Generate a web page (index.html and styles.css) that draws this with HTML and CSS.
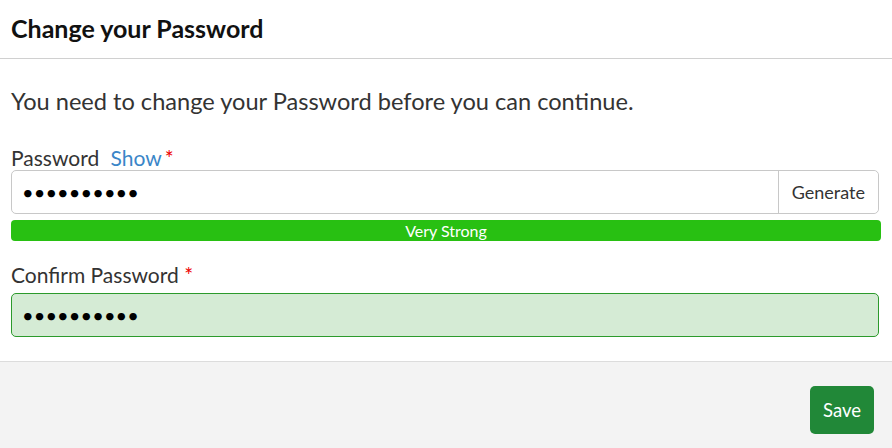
FILE: index.html
```html
<!DOCTYPE html>
<html lang="en">
<head>
  <meta charset="UTF-8" />
  <title>Change your Password</title>
  <link rel="stylesheet" href="styles.css">
</head>
<body>
  <div class="modal">
    <div class="modal-header">
      <h1>Change your Password</h1>
    </div>

    <div class="modal-body">
      <p class="intro">You need to change your Password before you can continue.</p>

      <label for="password">Password <a href="#" class="show">Show</a><span class="req">*</span></label>
      <div class="input-group">
        <input type="password" id="password" value="aaaaaaaaaa" />
        <button type="button" class="addon">Generate</button>
      </div>
      <div class="strength">Very Strong</div>

      <label for="confirm">Confirm Password <span class="req">*</span></label>
      <input type="password" id="confirm" class="valid" value="aaaaaaaaaa" />
    </div>

    <div class="modal-footer">
      <button type="submit" class="save">Save</button>
    </div>
  </div>
</body>
</html>
```

FILE: styles.css
```css
body {
  margin: 0;
  font-family: Lato, "Open Sans", sans-serif;
  color: #333;
  background-color: #fff;
}

.modal-header {
  height: 59px;
  padding: 0 11px 2px;
  box-sizing: border-box;
  display: flex;
  align-items: center;
  border-bottom: 1px solid #d0d0d0;
}

.modal-header h1 {
  margin: 0;
  font-size: 25px;
  font-weight: bold;
  color: #111;
}

.modal-body {
  padding: 28px 11px 24px;
}

.intro {
  margin: 0 0 31px;
  font-size: 23.6px;
  line-height: 28px;
}

label {
  display: block;
  font-size: 21px;
  line-height: 24px;
}

.show {
  color: #3a86c8;
  text-decoration: none;
  margin: 0 3px 0 6px;
}

.req {
  color: #e00;
}

.input-group {
  display: flex;
  border: 1px solid #c8c8c8;
  border-radius: 5px;
  height: 44px;
  box-sizing: border-box;
  margin-right: 2px;
}

.input-group input {
  flex: 1;
  border: none;
  border-radius: 5px 0 0 5px;
}

input[type="password"] {
  font-family: Lato, sans-serif;
  font-size: 20px;
  padding: 0 10px;
  letter-spacing: 0.1px;
  color: #000;
  outline: none;
  background: transparent;
}

.addon {
  border: none;
  border-left: 1px solid #c8c8c8;
  background: #fff;
  border-radius: 0 5px 5px 0;
  font-family: Lato, sans-serif;
  font-size: 18px;
  color: #333;
  padding: 0 13px;
}

.strength {
  margin-top: 6px;
  height: 21px;
  line-height: 21px;
  background-color: #28c012;
  color: #fff;
  text-align: center;
  font-size: 16px;
  border-radius: 4px;
}

.strength + label {
  margin-top: 22px;
}

input.valid {
  display: block;
  box-sizing: border-box;
  margin-top: 6px;
  height: 44px;
  border: 1px solid #2c9a2c;
  border-radius: 5px;
  background-color: #d5ebd5;
  width: calc(100% - 2px);
}

.modal-footer {
  background-color: #f3f3f3;
  border-top: 1px solid #dcdcdc;
  height: 87px;
  display: flex;
  justify-content: flex-end;
  align-items: flex-start;
  padding: 24px 18px 0;
  box-sizing: border-box;
}

.save {
  background-color: #218838;
  color: #fff;
  border: none;
  border-radius: 5px;
  font-family: Lato, sans-serif;
  font-size: 18.5px;
  width: 64px;
  height: 48px;
}
```
